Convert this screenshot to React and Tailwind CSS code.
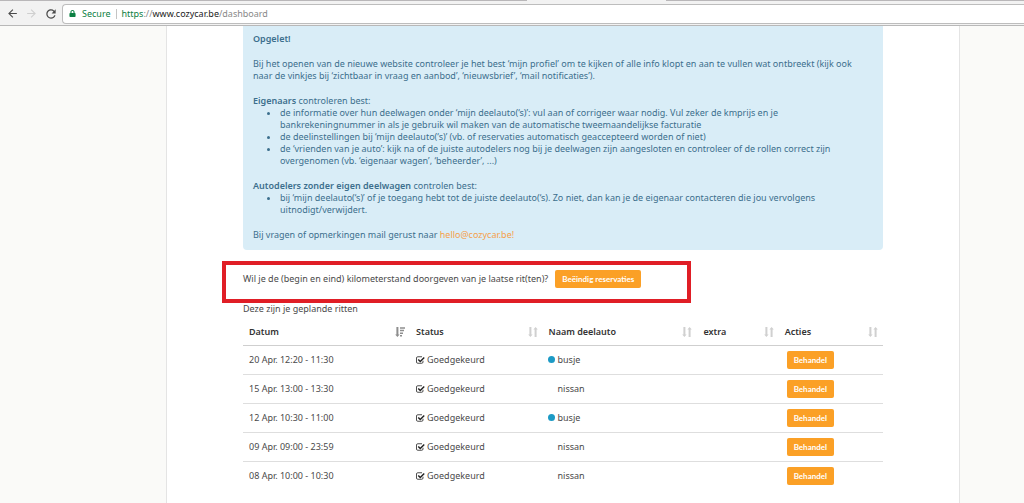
import React from 'react'
import { FaLock } from 'react-icons/fa'
import { MdArrowBack, MdArrowForward, MdRefresh } from 'react-icons/md'

const rides = [
  { id: 1, date: '20 Apr. 12:20 - 11:30', car: 'busje', marked: true },
  { id: 2, date: '15 Apr. 13:00 - 13:30', car: 'nissan', marked: false },
  { id: 3, date: '12 Apr. 10:30 - 11:00', car: 'busje', marked: true },
  { id: 4, date: '09 Apr. 09:00 - 23:59', car: 'nissan', marked: false },
  { id: 5, date: '08 Apr. 10:00 - 10:30', car: 'nissan', marked: false },
]

const columns = [
  { label: 'Datum', width: 'w-[26.1%]', sorted: true },
  { label: 'Status', width: 'w-[20.7%]' },
  { label: 'Naam deelauto', width: 'w-[24.2%]' },
  { label: 'extra', width: 'w-[12.7%]' },
  { label: 'Acties', width: 'w-[16.3%]' },
]

function SortIcon() {
  return (
    <svg viewBox="0 0 10 10" className="size-[10px] text-[#d0d0d0]" fill="currentColor" aria-hidden="true">
      <path d="M1.4 0h2v7.4h1.2L2.4 10 .2 7.4h1.2z" />
      <path d="M6.6 10h2V2.6h1.2L7.6 0 5.4 2.6h1.2z" />
    </svg>
  )
}

function SortedIcon() {
  return (
    <svg viewBox="0 0 10 10" className="size-[10px] text-[#8e8e8e]" fill="currentColor" aria-hidden="true">
      <path d="M1.4 0h2v7.4h1.2L2.4 10 .2 7.4h1.2z" />
      <path d="M5 .2h5v1.5H5zM5 2.8h4v1.5H5zM5 5.4h3v1.5H5zM5 8h2v1.5H5z" />
    </svg>
  )
}

function CheckIcon() {
  return (
    <svg viewBox="0 0 18 16" className="h-2 w-[9px] text-[#222]" fill="none" stroke="currentColor" aria-hidden="true">
      <path d="M14 9.5V12a2.5 2.5 0 0 1-2.5 2.5h-8A2.5 2.5 0 0 1 1 12V4a2.5 2.5 0 0 1 2.5-2.5H12" strokeWidth="1.6" />
      <path d="M4.5 7l4 4 8-8" strokeWidth="3" />
    </svg>
  )
}

function BrowserBar() {
  return (
    <header className="border-b border-[#b8b8b8] bg-[#f2f2f2]">
      <div className="flex h-px bg-[#b9b7b9]">
        <div className="ml-[51.5%] w-[13.5%] bg-[#f2f2f2]" />
      </div>
      <div className="flex h-6 items-center pt-px">
        <nav className="flex w-[62px] shrink-0 items-center gap-[6px] pl-[6px]">
          <button type="button" aria-label="Terug">
            <MdArrowBack className="size-[13px] text-[#4a4a4a]" />
          </button>
          <button type="button" aria-label="Vooruit">
            <MdArrowForward className="size-[13px] text-[#cfcfcf]" />
          </button>
          <button type="button" aria-label="Vernieuwen">
            <MdRefresh className="size-[14px] text-[#4a4a4a]" />
          </button>
        </nav>
        <div className="flex h-5 grow items-center rounded-l-sm border border-r-0 border-[#bdbdbd] bg-white pl-[6px]">
          <FaLock className="size-[7px] text-[#0b8043]" />
          <span className="ml-[6px] text-[#0b8043]">Secure</span>
          <span className="mx-[5px] h-[10px] w-px bg-[#c4c4c4]" />
          <span className="text-[#888]">
            <span className="text-[#0b8043]">https</span>://
            <span className="text-[#222]">www.cozycar.be</span>/dashboard
          </span>
        </div>
      </div>
    </header>
  )
}

function Notice() {
  return (
    <section className="flex flex-col gap-[13px] rounded-b-sm bg-[#d9edf7] px-[10px] pt-[7px] pb-[9px] text-[#3c6f8d]">
      <p className="font-semibold">Opgelet!</p>
      <p>
        Bij het openen van de nieuwe website controleer je het best ‘mijn profiel’ om te kijken of alle info klopt en aan te vullen wat ontbreekt (kijk ook
        naar de vinkjes bij ‘zichtbaar in vraag en aanbod’, ‘nieuwsbrief’, ‘mail notificaties’).
      </p>
      <div>
        <p>
          <b className="font-semibold">Eigenaars</b> controleren best:
        </p>
        <ul className="list-disc pl-[27px]">
          <li>
            de informatie over hun deelwagen onder ‘mijn deelauto(‘s)’: vul aan of corrigeer waar nodig. Vul zeker de kmprijs en je
            <br />
            bankrekeningnummer in als je gebruik wil maken van de automatische tweemaandelijkse facturatie
          </li>
          <li>de deelinstellingen bij ‘mijn deelauto(‘s)’ (vb. of reservaties automatisch geaccepteerd worden of niet)</li>
          <li>
            de ‘vrienden van je auto’: kijk na of de juiste autodelers nog bij je deelwagen zijn aangesloten en controleer of de rollen correct zijn
            <br />
            overgenomen (vb. ‘eigenaar wagen’, ‘beheerder’, ...)
          </li>
        </ul>
      </div>
      <div>
        <p>
          <b className="font-semibold">Autodelers zonder eigen deelwagen</b> controlen best:
        </p>
        <ul className="list-disc pl-[27px]">
          <li>
            bij ‘mijn deelauto(‘s)’ of je toegang hebt tot de juiste deelauto(‘s). Zo niet, dan kan je de eigenaar contacteren die jou vervolgens
            <br />
            uitnodigt/verwijdert.
          </li>
        </ul>
      </div>
      <p>
        Bij vragen of opmerkingen mail gerust naar{' '}
        <a href="mailto:hello@cozycar.be" className="text-[#f5a04a]">
          hello@cozycar.be!
        </a>
      </p>
    </section>
  )
}

function OrangeButton({ children }) {
  return (
    <button type="button" className="h-[18px] rounded-[2px] bg-[#fba026] px-[7px] font-['Lato',sans-serif] text-[8px] font-bold whitespace-nowrap text-white">
      {children}
    </button>
  )
}

function RidesTable() {
  return (
    <table className="w-full table-fixed text-left">
      <thead>
        <tr className="h-[26px] border-b border-[#cfcfcf]">
          {columns.map((c) => (
            <th key={c.label} className={`${c.width} pr-[5px] pl-[6px] font-semibold text-[#333]`}>
              <div className="flex items-center justify-between">
                {c.label}
                {c.sorted ? <SortedIcon /> : <SortIcon />}
              </div>
            </th>
          ))}
        </tr>
      </thead>
      <tbody>
        {rides.map((r) => (
          <tr key={r.id} className="h-[29px] border-b border-[#dedede] last:border-b-0">
            <td className="pl-[6px]">{r.date}</td>
            <td className="pl-[6px]">
              <span className="flex items-center gap-[2px]">
                <CheckIcon />
                Goedgekeurd
              </span>
            </td>
            <td className="pl-[5px]">
              <span className="flex items-center gap-[3px]">
                <span className={r.marked ? 'size-[7px] rounded-full bg-[#1c9ac5]' : 'size-[7px]'} />
                {r.car}
              </span>
            </td>
            <td />
            <td className="pl-2">
              <OrangeButton>Behandel</OrangeButton>
            </td>
          </tr>
        ))}
      </tbody>
    </table>
  )
}

export default function App() {
  return (
    <div className="flex min-h-screen flex-col bg-[#fafaf8] font-['Noto_Sans',sans-serif] text-[9px] leading-[12px] text-[#4a4a4a]">
      <BrowserBar />
      <div className="flex grow pr-16 pl-[166px]">
        <main className="grow border-x border-[#e4e4e4] bg-white px-[76px]">
          <Notice />
          <div className="mt-[11px] -ml-[21px] flex w-[469px] items-center gap-[7px] border-4 border-[#e01e26] pt-[5px] pb-[11px] pl-[17px]">
            <p>Wil je de (begin en eind) kilometerstand doorgeven van je laatse rit(ten)?</p>
            <OrangeButton>Beëindig reservaties</OrangeButton>
          </div>
          <p>Deze zijn je geplande ritten</p>
          <div className="mt-1">
            <RidesTable />
          </div>
        </main>
      </div>
    </div>
  )
}
